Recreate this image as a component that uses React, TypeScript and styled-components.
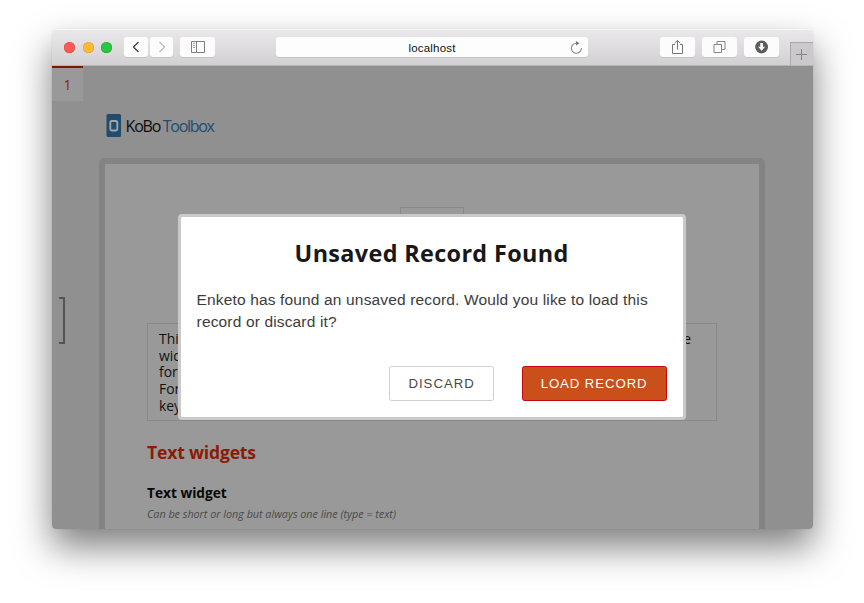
import React from 'react';
import styled, { createGlobalStyle } from 'styled-components';

const Global = createGlobalStyle`
  * { box-sizing: border-box; }
  html, body { margin: 0; background: #fff; }
  body { width: 864px; height: 603px; overflow: hidden; font-family: "Open Sans", sans-serif; }
  h1, h2, h3, p { margin: 0; font-weight: normal; }
  button { font: inherit; padding: 0; border: 0; background: none; }
  svg { display: block; }
`;

const Desktop = styled.div`
  width: 864px;
  height: 603px;
  padding: 29px 52px 74px;
  overflow: hidden;
`;

const BrowserWindow = styled.div`
  position: relative;
  display: flex;
  flex-direction: column;
  width: 760.5px;
  height: 500px;
  border-radius: 5px 5px 4px 4px;
  box-shadow: 0 0 1px rgba(0, 0, 0, 0.25), 0 18px 36px rgba(0, 0, 0, 0.5);
`;

const Toolbar = styled.header`
  display: flex;
  flex: none;
  align-items: center;
  height: 37px;
  padding: 0 0 1px 12px;
  border-radius: 5px 5px 0 0;
  border-top: 1px solid #f7f7f7;
  border-bottom: 1px solid #b5b3b5;
  background: linear-gradient(#eae8ea, #d3d0d3);
`;

const Lights = styled.div`
  display: flex;
  gap: 7.5px;
  margin-right: 12px;
`;

const Light = styled.span<{ $fill: string; $edge: string }>`
  width: 11px;
  height: 11px;
  border-radius: 50%;
  background: ${p => p.$fill};
  box-shadow: inset 0 0 0 0.5px ${p => p.$edge};
`;

const ToolButton = styled.button<{ $width: number; $gap: number }>`
  display: flex;
  align-items: center;
  justify-content: center;
  width: ${p => p.$width}px;
  height: 20px;
  margin-right: ${p => p.$gap}px;
  border-radius: 3px;
  background: #fcfcfc;
  box-shadow: 0 1px 0 rgba(0, 0, 0, 0.08);
`;

const Address = styled.div`
  display: grid;
  grid-template-columns: 24px 1fr 24px;
  align-items: center;
  justify-items: center;
  width: 312px;
  height: 20px;
  margin: 0 72px 0 0;
  border-radius: 3px;
  background: #fdfdfd;
  box-shadow: 0 1px 0 rgba(0, 0, 0, 0.08);
  font: 11.5px/20px "Liberation Sans", sans-serif;
  color: #111;
`;

const Host = styled.span`
  grid-column: 2;
  padding-top: 1px;
  letter-spacing: 0.2px;
`;

const NewTab = styled.button`
  display: flex;
  align-items: center;
  justify-content: center;
  align-self: flex-end;
  width: 23px;
  height: 23px;
  margin: 0 0 -1px auto;
  border: solid #aaa8aa;
  border-width: 1px 0 0 1px;
  background: #cbc9cb;
`;

const Page = styled.main`
  display: flex;
  flex: 1;
  min-height: 0;
  overflow: hidden;
  border-radius: 0 0 4px 4px;
  background: #909090;
`;

const Rail = styled.nav`
  display: flex;
  flex-direction: column;
  width: 47px;
`;

const PageTab = styled.div`
  width: 31px;
  height: 35px;
  border-top: 2.5px solid #7d1800;
  background: #999;
  color: #842510;
  font-size: 14px;
  line-height: 34px;
  text-align: center;
`;

const Bracket = styled.div`
  width: 6px;
  height: 47px;
  margin: 196px 0 0 7px;
  border: solid #555;
  border-width: 2px 2px 2px 0;
`;

const Content = styled.div`
  width: 666px;
  padding-top: 48px;
`;

const Brand = styled.div`
  display: flex;
  align-items: center;
  height: 24px;
  margin: 0 0 20px 7px;
`;

const BrandText = styled.span<{ $color: string; $spacing: number }>`
  color: ${p => p.$color};
  font-size: 16px;
  line-height: 24px;
  letter-spacing: ${p => p.$spacing}px;
  margin-right: 2.5px;
`;

const Form = styled.section`
  height: 400px;
  padding: 43px 42px 0;
  border: 6px solid #838383;
  border-radius: 5px;
  background: #999;
`;

const Picture = styled.div`
  width: 64px;
  height: 80px;
  margin: 0 auto 36px 253px;
  border: 1px solid #898989;
`;

const Note = styled.div`
  width: 570px;
  height: 98px;
  padding: 7px 25px 0 11px;
  border: 1px solid #898989;
  color: #111;
  font-size: 13.9px;
  line-height: 16.7px;
`;

const NoteLine = styled.p`
  display: flex;
  justify-content: space-between;
`;

const GroupTitle = styled.h2`
  margin-top: 19px;
  color: #8a1c05;
  font-size: 17.6px;
  line-height: 24px;
  font-weight: 700;
  letter-spacing: -0.2px;
  white-space: nowrap;
`;

const Question = styled.h3`
  margin-top: 19px;
  color: #080808;
  font-size: 13.7px;
  line-height: 20px;
  font-weight: 700;
  white-space: nowrap;
`;

const Hint = styled.p`
  margin-top: 3px;
  color: #4a4a4a;
  font-size: 10.75px;
  line-height: 16px;
  font-style: italic;
  white-space: nowrap;
`;

const Dialog = styled.div`
  position: absolute;
  left: 125.6px;
  top: 184.5px;
  display: flex;
  flex-direction: column;
  width: 508px;
  height: 206.5px;
  padding: 20px 16px 16px;
  border: 3px solid #c9c9c9;
  border-radius: 4px;
  background: #fff;
`;

const DialogTitle = styled.h1`
  font-size: 23.4px;
  line-height: 32px;
  font-weight: 700;
  letter-spacing: 0.35px;
  text-align: center;
  white-space: nowrap;
  color: #181818;
`;

const DialogText = styled.p`
  margin-top: 20px;
  font: 15.5px/22px "Liberation Sans", sans-serif;
  letter-spacing: 0.15px;
  color: #3c3c3c;
  white-space: nowrap;
`;

const Actions = styled.div`
  display: flex;
  justify-content: flex-end;
  gap: 27.5px;
  margin-top: auto;
`;

const Action = styled.button<{ $primary?: boolean }>`
  width: ${p => (p.$primary ? 145 : 105)}px;
  height: 35px;
  border: 1px solid ${p => (p.$primary ? '#c4060c' : '#d0d0d0')};
  border-radius: 2.5px;
  background: ${p => (p.$primary ? '#cb4f1b' : '#fff')};
  color: ${p => (p.$primary ? '#fff' : '#484848')};
  font: 13.2px/33px "Liberation Sans", sans-serif;
  letter-spacing: ${p => (p.$primary ? 0.92 : 1.0)}px;
  white-space: nowrap;
`;

const Chevron = ({ color, d }: { color: string; d: string }) => (
  <svg width="10" height="14" viewBox="0 0 10 14" fill="none" stroke={color} strokeWidth="1.3"><path d={d} /></svg>
);

const noteLines = [
  ['This', 'the'],
  ['wide', ''],
  ['form', ''],
  ['Form', ''],
  ['keys', ''],
];

export default function App() {
  return (
    <Desktop>
      <Global />
      <BrowserWindow>
        <Toolbar>
          <Lights>
            <Light $fill="#fb5a55" $edge="#e0443e" />
            <Light $fill="#fdb935" $edge="#dfa023" />
            <Light $fill="#29c644" $edge="#1aab29" />
          </Lights>
          <ToolButton $width={24} $gap={2}><Chevron color="#444" d="M7.5 2 2.5 7l5 5" /></ToolButton>
          <ToolButton $width={23} $gap={7}><Chevron color="#bbb" d="m2.5 2 5 5-5 5" /></ToolButton>
          <ToolButton $width={35} $gap={61}>
            <svg width="14" height="12" viewBox="0 0 14 12" fill="none" stroke="#808080" strokeWidth="1">
              <path d="M.5.5h13v11H.5zM5.5.5v11" /><path d="M2 2.5h2M2 4.5h2M2 6.5h2" strokeWidth=".7" />
            </svg>
          </ToolButton>
          <Address>
            <Host>localhost</Host>
            <svg width="13" height="14" viewBox="0 0 13 14" fill="none" stroke="#888" strokeWidth="1.1">
              <path d="M11.4 7A5 5 0 1 1 6.5 2.2h1" /><path d="m6 0 3.5 2.3L6 4.6z" fill="#777" stroke="none" />
            </svg>
          </Address>
          <ToolButton $width={35} $gap={7}>
            <svg width="13" height="16" viewBox="0 0 13 16" fill="none" stroke="#777" strokeWidth="1">
              <path d="M4 5.5H1.5v9h10v-9H9M6.5 10.5V1.5M3.7 4.2l2.8-2.8 2.8 2.8" />
            </svg>
          </ToolButton>
          <ToolButton $width={35} $gap={7}>
            <svg width="13" height="12" viewBox="0 0 13 12" fill="none" stroke="#858585" strokeWidth="1">
              <path d="M1 3.5h7.5v8H1z" /><path d="M4 3.5v-3h8v8H8.5" />
            </svg>
          </ToolButton>
          <ToolButton $width={35} $gap={0}>
            <svg width="14" height="14" viewBox="0 0 14 14"><circle cx="6.6" cy="7" r="6.4" fill="#5c5c5c" /><path d="M5.3 3h2.6v3.8h2.2l-3.5 3.9-3.5-3.9h2.2z" fill="#fff" /></svg>
          </ToolButton>
          <NewTab>
            <svg width="11" height="11" viewBox="0 0 11 11" stroke="#858385" strokeWidth="1"><path d="M5.5 0v11M0 5.5h11" /></svg>
          </NewTab>
        </Toolbar>
        <Page>
          <Rail>
            <PageTab>1</PageTab>
            <Bracket />
          </Rail>
          <Content>
            <Brand>
              <svg width="19.5" height="24" viewBox="0 0 19.5 24">
                <rect x="0.5" y="0" width="14.5" height="23" rx="1.5" fill="#204c6f" />
                <rect x="4.3" y="7" width="7" height="9.5" rx="1.5" fill="#204c6f" stroke="#a0a5aa" strokeWidth="1.9" />
              </svg>
              <BrandText $color="#0c0c0c" $spacing={-1.15}>KoBo</BrandText>
              <BrandText $color="#204c6f" $spacing={-1.3}>Toolbox</BrandText>
            </Brand>
            <Form>
              <Picture />
              <Note>
                {noteLines.map(([start, end]) => (
                  <NoteLine key={start}><span>{start}</span><span>{end}</span></NoteLine>
                ))}
              </Note>
              <GroupTitle>Text widgets</GroupTitle>
              <Question>Text widget</Question>
              <Hint>Can be short or long but always one line (type = text)</Hint>
            </Form>
          </Content>
        </Page>
        <Dialog role="dialog">
          <DialogTitle>Unsaved Record Found</DialogTitle>
          <DialogText>Enketo has found an unsaved record. Would you like to load this<br />record or discard it?</DialogText>
          <Actions>
            <Action>DISCARD</Action>
            <Action $primary>LOAD RECORD</Action>
          </Actions>
        </Dialog>
      </BrowserWindow>
    </Desktop>
  );
}
